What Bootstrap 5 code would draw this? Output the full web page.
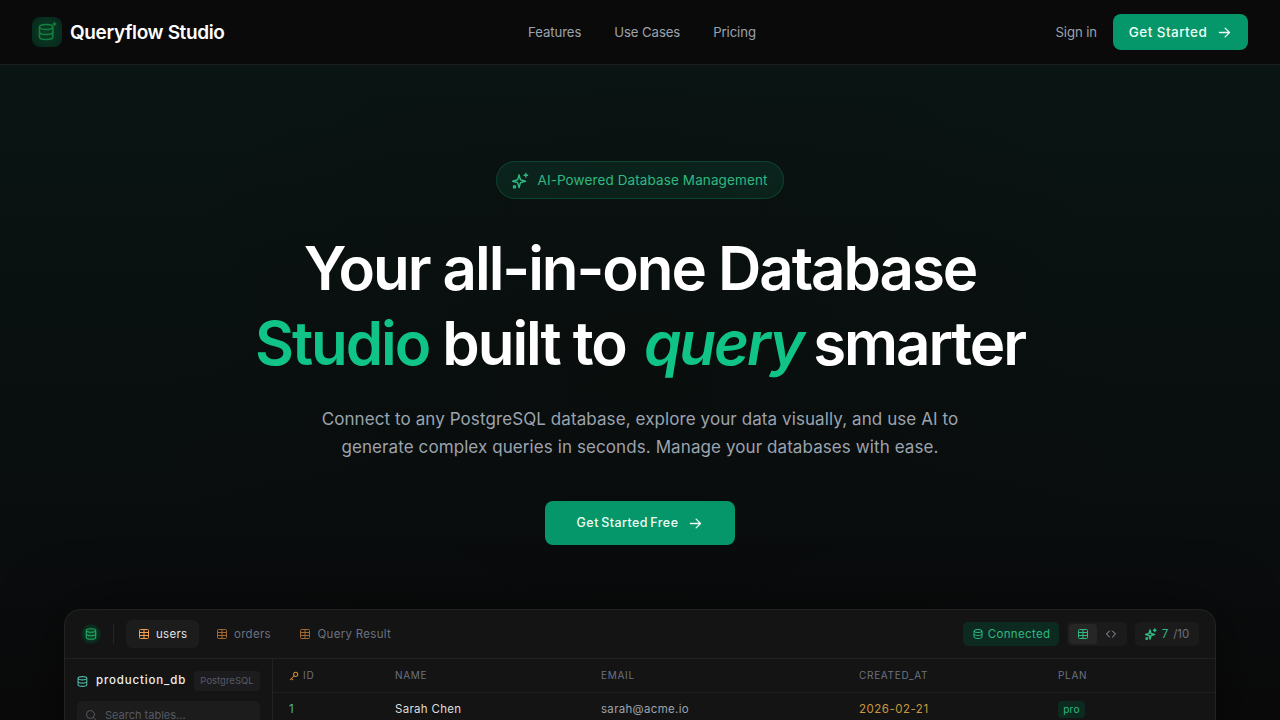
<!DOCTYPE html>
<html lang="en">
<head>
<meta charset="utf-8">
<title>Queryflow Studio</title>
<link href="https://cdn.jsdelivr.net/npm/bootstrap@5.3.0/dist/css/bootstrap.min.css" rel="stylesheet">
<style>
html,body{height:720px;overflow:hidden;}
body{background:#0a0a0a;color:#fff;font-family:"Inter","Liberation Sans",sans-serif;}
svg{display:block;flex:none;}
.qf-nav{height:65px;background:#0a0a0a;border-bottom:1px solid #1d1f1f;padding:0 32px;}
.qf-side{width:402px;}
.qf-side-r{width:398px;}
.qf-logo{width:30px;height:30px;border-radius:8px;background:radial-gradient(circle,#0a4026 0%,#06241a 100%);color:#15803d;}
.qf-brand{font-size:19px;font-weight:600;letter-spacing:-.36px;color:#fff;margin-left:8px;padding-top:2px;}
.qf-link{font-size:13.2px;color:#9ca3af;text-decoration:none;letter-spacing:-.1px;padding-top:2px;}
.qf-links{gap:33px;}
.qf-cta{background:#059669;color:#ecfdf5;border:0;font-weight:500;border-radius:8px;}
.qf-cta:hover{background:#059669;color:#ecfdf5;}
.qf-cta-sm{height:36px;width:135px;font-size:13.5px;gap:10px;padding:0;margin-left:16px;letter-spacing:.45px;}
.qf-cta-lg{height:44px;width:190px;font-size:12.5px;gap:10px;padding:0;letter-spacing:.45px;word-spacing:-1.5px;}
.qf-hero{height:655px;padding-top:96px;background:radial-gradient(ellipse 520px 420px at 640px 320px,rgba(10,10,10,.35),transparent 100%),linear-gradient(180deg,#0a1513 0%,#09100f 45%,#0a0c0d 80%,#0a0a0a 100%);}
.qf-pill{height:38px;width:288px;border-radius:19px;background:rgba(16,185,129,.1);border:1px solid rgba(16,185,129,.22);color:#2fb981;font-size:13.5px;gap:8px;letter-spacing:.11px;}
.qf-title{font-size:60px;line-height:75px;font-weight:600;letter-spacing:-2.05px;margin:32px 0 24px;color:#fff;}
.qf-green{color:#10c488;}
.qf-query{margin:0 -3px 0 5px;}
.qf-sub{font-size:17px;line-height:28px;color:#9ca3af;margin:0 0 40px;letter-spacing:.09px;}
.qf-app{width:1152px;height:200px;margin:64px auto 0;background:#141414;border:1px solid #232323;border-radius:16px 16px 0 0;box-shadow:0 0 60px rgba(0,0,0,.5);overflow:hidden;}
.qf-apphead{height:49px;border-bottom:1px solid #222;padding:0 16px;}
.qf-dot{width:20px;height:20px;border-radius:50%;background:radial-gradient(circle,#0c5230 0%,#0a2a1c 60%,transparent 100%);color:#22a35f;}
.qf-sep{width:1px;height:20px;background:#262626;margin:0 12px;}
.qf-tab{height:28px;padding:0 12px;border-radius:6px;font-size:11.5px;color:#6b7280;gap:6px;letter-spacing:.3px;}
.qf-tab-on{background:#1c1c1c;color:#e5e5e5;}
.qf-tab-gap{gap:4.5px;}
.qf-tt{padding-top:2px;}
.qf-orange{color:#f5a04a;}
.qf-orange-dim{color:#a0682f;}
.qf-conn{height:24px;width:96px;border-radius:5px;background:#0d2a20;color:#2fb981;font-size:11.5px;gap:4px;letter-spacing:.35px;}
.qf-toggle{height:24px;width:60px;border-radius:5px;background:#1b1b1b;padding:2px;margin-left:8px;}
.qf-tg{height:20px;width:28px;border-radius:4px;color:#9ca3af;}
.qf-tg-on{background:#262626;color:#2fb981;}
.qf-count{height:24px;width:64px;border-radius:5px;background:#1b1b1b;margin-left:8px;font-size:11.5px;color:#2fb981;gap:5px;}
.qf-count span+span{color:#6b7280;margin-left:0;}
.qf-aside{width:208px;border-right:1px solid #222;padding:12px;height:200px;}
.qf-dbname{font-size:11.5px;font-weight:500;color:#eee;letter-spacing:.85px;margin-left:6px;}
.qf-tagpg{height:20px;width:66px;border-radius:4px;background:#1c1c1f;color:#565b63;font-size:9.5px;margin-left:auto;}
.qf-teal{color:#4fb8a8;}
.qf-search{height:28px;border-radius:5px;background:#1c1c1c;margin-top:10px;padding:0 8px;gap:8px;color:#555b63;font-size:11px;}
.qf-table{flex:1;min-width:0;}
.qf-grid{display:grid;grid-template-columns:106px 206px 258px 199px 1fr;padding-left:16px;}
.qf-th{height:34px;border-bottom:1px solid #1f1f1f;font-size:10px;color:#6b7280;letter-spacing:.7px;align-items:center;}
.qf-td{height:34px;font-size:11.5px;align-items:center;letter-spacing:.3px;}
.qf-c1{color:#4fb8a8;}
.qf-c2{color:#ddd;}
.qf-c3{color:#9ca3af;}
.qf-c4{color:#c9993f;letter-spacing:.5px;}
.qf-key{color:#c98a2f;}
.qf-pro{display:inline-block;height:17px;line-height:17px;width:27px;text-align:center;border-radius:4px;background:#0d2a20;color:#2fb981;font-size:10px;}
</style>
</head>
<body>
<nav class="qf-nav d-flex align-items-center justify-content-between">
  <div class="qf-side d-flex align-items-center">
    <span class="qf-logo d-flex align-items-center justify-content-center">
      <svg width="20" height="20" viewBox="0 0 24 24" fill="none" stroke="currentColor" stroke-width="1.8" stroke-linecap="round"><ellipse cx="11" cy="6" rx="8" ry="3"/><path d="M3 6v12c0 1.700 3.600 3 8 3s8-1.300 8-3V6"/><path d="M3 12c0 1.700 3.600 3 8 3s8-1.300 8-3"/><path d="M21 1v3M19.500 2.500h3"/></svg>
    </span>
    <span class="qf-brand">Queryflow Studio</span>
  </div>
  <div class="d-flex qf-links">
    <a class="qf-link" href="#">Features</a>
    <a class="qf-link" href="#">Use Cases</a>
    <a class="qf-link" href="#">Pricing</a>
  </div>
  <div class="qf-side-r d-flex align-items-center justify-content-end">
    <a class="qf-link" href="#">Sign in</a>
    <button class="btn qf-cta qf-cta-sm d-flex align-items-center justify-content-center" type="button">Get Started
      <svg width="15" height="15" viewBox="0 0 24 24" fill="none" stroke="currentColor" stroke-width="2.200" stroke-linecap="round" stroke-linejoin="round"><path d="M4 12h16M13 5l7 7-7 7"/></svg>
    </button>
  </div>
</nav>
<main class="qf-hero text-center">
  <div class="qf-pill d-inline-flex align-items-center justify-content-center">
    <svg width="17" height="17" viewBox="0 0 24 24" fill="none" stroke="currentColor" stroke-width="2" stroke-linecap="round" stroke-linejoin="round"><path d="M10 4l2 7 7 2-7 2-2 7-2-7-7-2 7-2z"/><path d="M19.500 2v5M17 4.500h5"/><circle cx="3.500" cy="21" r="1.500"/></svg>
    AI-Powered Database Management
  </div>
  <h1 class="qf-title"><div>Your all-in-one Database</div><div><span class="qf-green">Studio</span> built to <em class="qf-green qf-query">query</em> smarter</div></h1>
  <p class="qf-sub">Connect to any PostgreSQL database, explore your data visually, and use AI to<br>generate complex queries in seconds. Manage your databases with ease.</p>
  <button class="btn qf-cta qf-cta-lg d-inline-flex align-items-center justify-content-center" type="button">Get Started Free
    <svg width="15" height="15" viewBox="0 0 24 24" fill="none" stroke="currentColor" stroke-width="2.200" stroke-linecap="round" stroke-linejoin="round"><path d="M4 12h16M13 5l7 7-7 7"/></svg>
  </button>
  <section class="qf-app text-start">
    <div class="qf-apphead d-flex align-items-center">
      <span class="qf-dot d-flex align-items-center justify-content-center">
        <svg width="14" height="14" viewBox="0 0 24 24" fill="none" stroke="currentColor" stroke-width="2"><ellipse cx="12" cy="6" rx="8" ry="3"/><path d="M4 6v12c0 1.700 3.600 3 8 3s8-1.300 8-3V6"/><path d="M4 12c0 1.700 3.600 3 8 3s8-1.300 8-3"/></svg>
      </span>
      <span class="qf-sep"></span>
      <div class="d-flex qf-tab-gap">
        <span class="qf-tab qf-tab-on d-flex align-items-center"><svg class="qf-orange" width="12" height="12" viewBox="0 0 24 24" fill="none" stroke="currentColor" stroke-width="2"><rect x="3" y="3" width="18" height="18" rx="2"/><path d="M3 9h18M3 15h18M12 3v18"/></svg><span class="qf-tt">users</span></span>
        <span class="qf-tab d-flex align-items-center"><svg class="qf-orange-dim" width="12" height="12" viewBox="0 0 24 24" fill="none" stroke="currentColor" stroke-width="2"><rect x="3" y="3" width="18" height="18" rx="2"/><path d="M3 9h18M3 15h18M12 3v18"/></svg><span class="qf-tt">orders</span></span>
        <span class="qf-tab d-flex align-items-center"><svg class="qf-orange-dim" width="12" height="12" viewBox="0 0 24 24" fill="none" stroke="currentColor" stroke-width="2"><rect x="3" y="3" width="18" height="18" rx="2"/><path d="M3 9h18M3 15h18M12 3v18"/></svg><span class="qf-tt">Query Result</span></span>
      </div>
      <div class="ms-auto d-flex align-items-center">
        <span class="qf-conn d-flex align-items-center justify-content-center"><svg width="12" height="12" viewBox="0 0 24 24" fill="none" stroke="currentColor" stroke-width="2"><ellipse cx="12" cy="6" rx="8" ry="3"/><path d="M4 6v12c0 1.700 3.600 3 8 3s8-1.300 8-3V6"/><path d="M4 12c0 1.700 3.600 3 8 3s8-1.300 8-3"/></svg><span class="qf-tt">Connected</span></span>
        <span class="qf-toggle d-flex">
          <span class="qf-tg qf-tg-on d-flex align-items-center justify-content-center"><svg width="12" height="12" viewBox="0 0 24 24" fill="none" stroke="currentColor" stroke-width="2"><rect x="3" y="3" width="18" height="18" rx="2"/><path d="M3 9h18M3 15h18M12 3v18"/></svg></span>
          <span class="qf-tg d-flex align-items-center justify-content-center"><svg width="12" height="12" viewBox="0 0 24 24" fill="none" stroke="currentColor" stroke-width="2" stroke-linecap="round" stroke-linejoin="round"><path d="M9 6l-6 6 6 6M15 6l6 6-6 6"/></svg></span>
        </span>
        <span class="qf-count d-flex align-items-center justify-content-center"><svg width="12" height="12" viewBox="0 0 24 24" fill="none" stroke="currentColor" stroke-width="3" stroke-linecap="round" stroke-linejoin="round"><path d="M10 4l2 7 7 2-7 2-2 7-2-7-7-2 7-2z"/><path d="M19.500 2v5M17 4.500h5"/><circle cx="3.500" cy="21" r="1.500"/></svg><span class="qf-tt">7</span><span class="qf-tt">/10</span></span>
      </div>
    </div>
    <div class="d-flex">
      <aside class="qf-aside">
        <div class="d-flex align-items-center">
          <svg class="qf-teal" width="13" height="13" viewBox="0 0 24 24" fill="none" stroke="currentColor" stroke-width="2"><ellipse cx="10" cy="6" rx="8" ry="3"/><path d="M2 6v12c0 1.700 3.600 3 8 3s8-1.300 8-3V6"/><path d="M2 12c0 1.700 3.600 3 8 3s8-1.300 8-3"/></svg>
          <span class="qf-dbname">production_db</span>
          <span class="qf-tagpg d-flex align-items-center justify-content-center">PostgreSQL</span>
        </div>
        <div class="qf-search d-flex align-items-center"><svg width="12" height="12" viewBox="0 0 24 24" fill="none" stroke="currentColor" stroke-width="2" stroke-linecap="round"><circle cx="11" cy="11" r="8"/><path d="M21 21l-4.500-4.500"/></svg>Search tables...</div>
      </aside>
      <div class="qf-table">
        <div class="qf-grid qf-th">
          <span class="d-flex align-items-center gap-1"><svg class="qf-key" width="10" height="10" viewBox="0 0 24 24" fill="none" stroke="currentColor" stroke-width="2.500" stroke-linecap="round" stroke-linejoin="round"><circle cx="16" cy="8" r="5"/><path d="M12 12l-9 9M6 18l3 3"/></svg>ID</span>
          <span>NAME</span><span>EMAIL</span><span>CREATED_AT</span><span>PLAN</span>
        </div>
        <div class="qf-grid qf-td">
          <span class="qf-c1">1</span><span class="qf-c2">Sarah Chen</span><span class="qf-c3">sarah@acme.io</span><span class="qf-c4">2026-02-21</span><span><span class="qf-pro">pro</span></span>
        </div>
      </div>
    </div>
  </section>
</main>
<script src="https://cdn.jsdelivr.net/npm/bootstrap@5.3.0/dist/js/bootstrap.bundle.min.js"></script>
</body>
</html>
